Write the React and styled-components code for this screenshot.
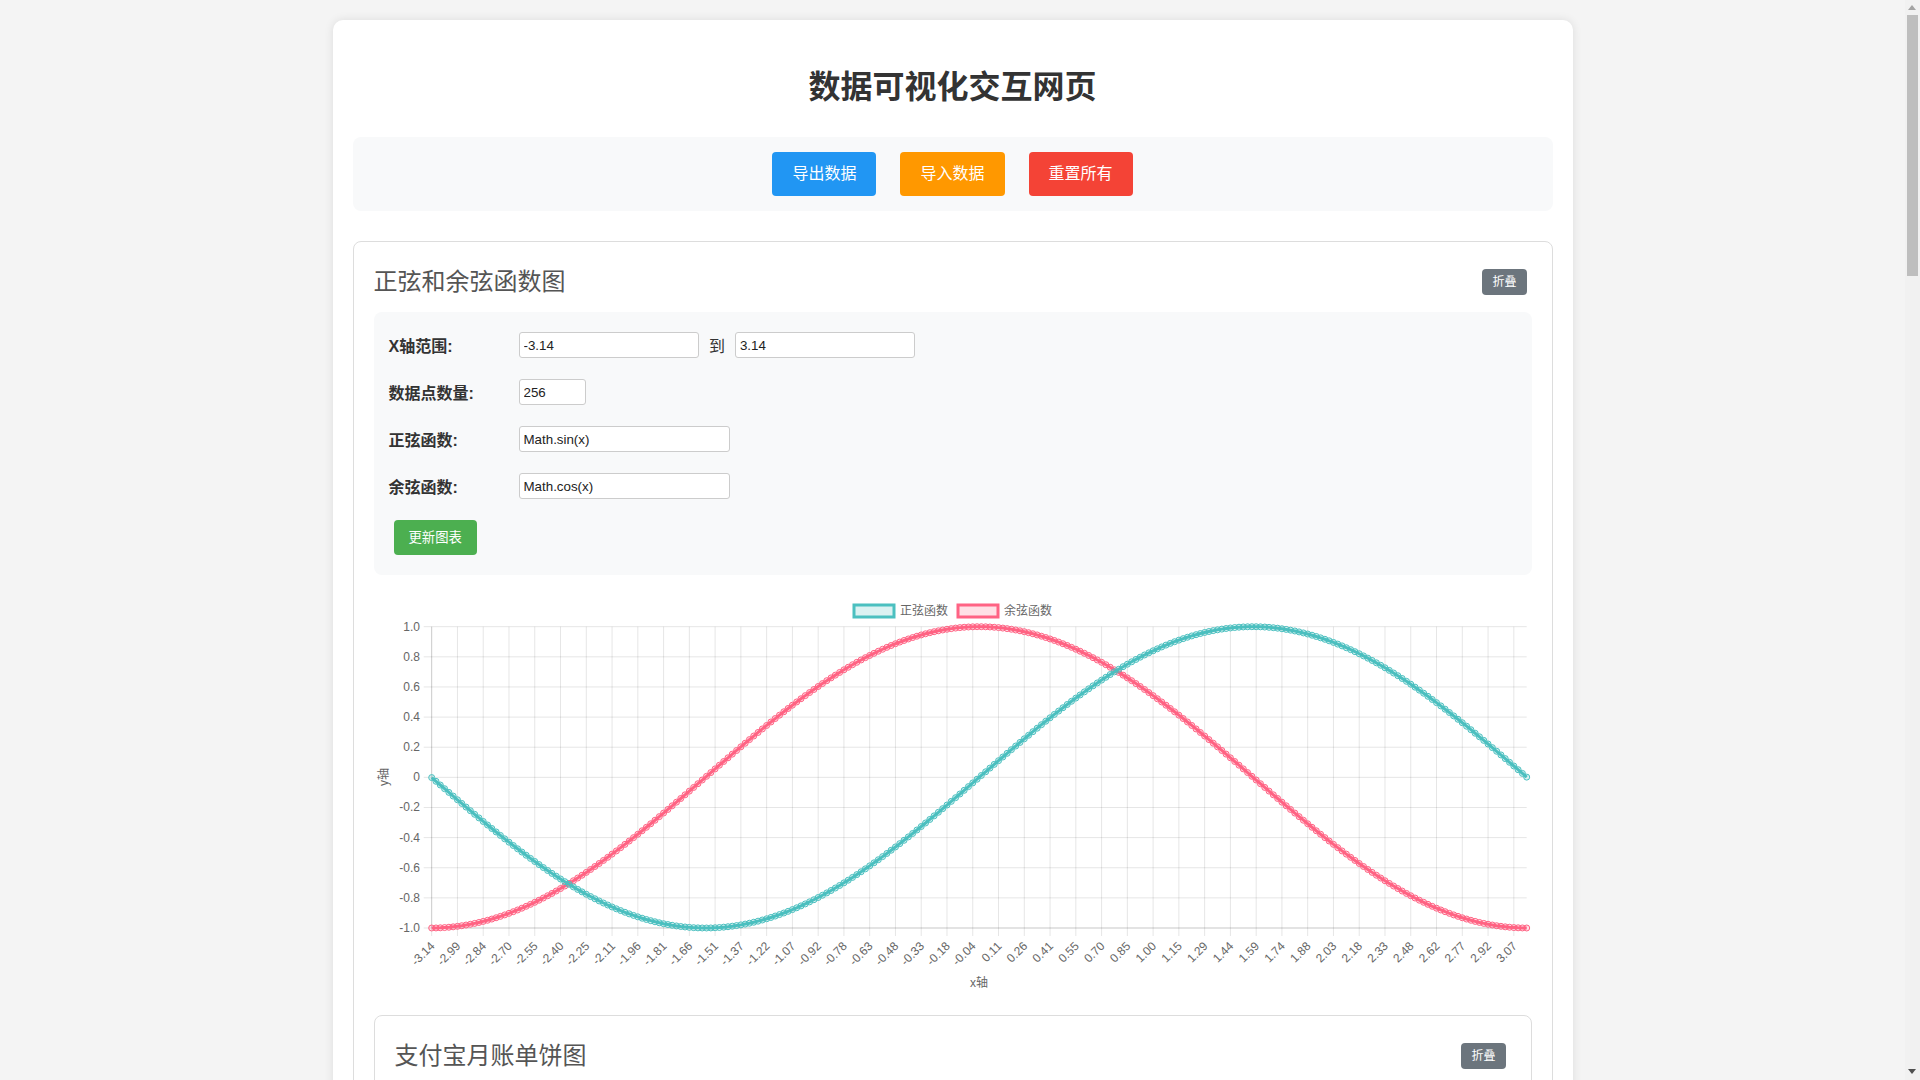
import React from 'react';
import styled, { createGlobalStyle } from 'styled-components';

const GlobalStyle = createGlobalStyle`
  body {
    margin: 0;
    padding: 20px 35px 20px 20px;
    background: #f4f4f4;
    font-family: "Liberation Sans", Arial, "Noto Sans CJK SC", sans-serif;
    color: #333;
  }
`;

// the page scrolls in the reference; headless shots hide the native bar, so draw it
const ScrollTrack = styled.div`
  position: fixed;
  top: 0;
  right: 0;
  width: 15px;
  height: 100vh;
  background: #f1f1f1;
  z-index: 10;
`;

const ScrollThumb = styled.div`
  position: absolute;
  top: 15px;
  left: 2px;
  width: 11px;
  height: 261px;
  background: #bebebe;
`;

const ScrollArrow = styled.div`
  position: absolute;
  left: 3px;
  width: 0;
  height: 0;
  border-left: 4.5px solid transparent;
  border-right: 4.5px solid transparent;
  ${(props) =>
    props.$down
      ? `bottom: 6px; border-top: 5px solid #505050;`
      : `top: 5px; border-bottom: 5px solid #a3a3a3;`}
`;

const Card = styled.div`
  max-width: 1200px;
  margin: 0 auto;
  padding: 20px;
  background: #fff;
  border-radius: 10px;
  box-shadow: 0 0 10px rgba(0, 0, 0, 0.1);
`;

const Title = styled.h1`
  margin: 23.5px 0 27.5px;
  font-size: 32px;
  line-height: 46px;
  text-align: center;
  color: #333;
`;

const Toolbar = styled.div`
  display: flex;
  justify-content: center;
  gap: 24px;
  padding: 15px;
  margin-bottom: 30px;
  background: #f8f9fa;
  border-radius: 8px;
`;

const ActionButton = styled.button`
  padding: 10px 20px;
  border: none;
  border-radius: 4px;
  background: ${(props) => props.$color};
  color: #fff;
  font-family: inherit;
  font-size: 16px;
  line-height: 24px;
  cursor: pointer;
`;

const Section = styled.div`
  padding: 20px;
  margin-bottom: ${(props) => (props.$last ? '0' : '20px')};
  border: 1px solid #ddd;
  border-radius: 8px;
`;

const SectionHeader = styled.div`
  display: flex;
  align-items: center;
  justify-content: space-between;
  height: 40px;
`;

const SectionTitle = styled.h2`
  margin: -6px 0 0;
  font-size: 24px;
  font-weight: normal;
  color: #555;
`;

const ToggleButton = styled.button`
  margin-right: 5px;
  padding: 4px 10px;
  border: none;
  border-radius: 4px;
  background: #6c757d;
  color: #fff;
  font-family: inherit;
  font-size: 12px;
  line-height: 18px;
`;

const Panel = styled.div`
  margin-top: 10px;
  padding: 20px 15px;
  background: #f8f9fa;
  border-radius: 8px;
`;

const FormRow = styled.div`
  display: flex;
  align-items: center;
  height: 26px;
  margin-bottom: 21px;
`;

const Label = styled.label`
  width: 130px;
  flex-shrink: 0;
  margin-top: -1px;
  font-size: 16px;
  font-weight: bold;
  color: #333;
`;

const TextInput = styled.input`
  box-sizing: border-box;
  width: ${(props) => props.$w}px;
  height: 26px;
  padding: 0 4px;
  border: 1px solid #ccc;
  border-radius: 3px;
  background: #fff;
  color: #222;
  font-family: "Liberation Sans", Arial, sans-serif;
  font-size: 13.33px;
`;

const RangeSep = styled.span`
  margin: 0 10px;
  font-size: 16px;
  color: #333;
`;

const UpdateButton = styled.button`
  margin-left: 5px;
  padding: 8px 15px;
  border: none;
  border-radius: 4px;
  background: #4caf50;
  color: #fff;
  font-family: inherit;
  font-size: 13.33px;
  line-height: 19px;
`;

const ChartBox = styled.div`
  height: 400px;
  margin: 20px 0;
`;

const ChartSvg = styled.svg`
  display: block;
  width: 100%;
  height: 100%;
  font-family: "Liberation Sans", Arial, "Noto Sans CJK SC", sans-serif;
  font-size: 12px;
`;

const Table = styled.table`
  width: 100%;
  margin-top: 20px;
  border-collapse: collapse;
  font-size: 14px;

  th,
  td {
    padding: 10px 12px;
    border: 1px solid #ddd;
    text-align: left;
  }

  th {
    background: #f2f2f2;
    color: #333;
  }
`;

// chart geometry (svg coordinates, 1158 x 400)
const W = 1158;
const PL = 57.7;
const PR = 1152.7;
const PT = 31.7;
const PB = 333;
const GRID = 'rgba(0,0,0,0.1)';
const TEAL = 'rgb(75, 192, 192)';
const PINK = 'rgb(255, 99, 132)';

const N = 256;
const xs = Array.from({ length: N }, (_, i) => -3.14 + (i * 6.28) / (N - 1));
const px = (i) => PL + (i * (PR - PL)) / (N - 1);
const py = (v) => PT + ((1 - v) / 2) * (PB - PT);

const yTicks = [1, 0.8, 0.6, 0.4, 0.2, 0, -0.2, -0.4, -0.6, -0.8, -1];

const Series = ({ fn, color, fill }) => {
  const pts = xs.map((x, i) => [px(i), py(fn(x))]);
  const d = pts.map((p, i) => `${i ? 'L' : 'M'}${p[0].toFixed(2)},${p[1].toFixed(2)}`).join('');
  return (
    <g>
      <path d={d} fill="none" stroke={color} strokeWidth="3" strokeLinejoin="round" />
      {pts.map((p, i) => (
        <circle key={i} cx={p[0]} cy={p[1]} r="3" fill={fill} stroke={color} strokeWidth="1" />
      ))}
    </g>
  );
};

const LegendItem = ({ x, color, fill, label }) => (
  <g>
    <rect x={x} y="10" width="40" height="12" fill={fill} stroke={color} strokeWidth="3" />
    <text x={x + 46} y="16" fill="#666" dominantBaseline="central">
      {label}
    </text>
  </g>
);

const TrigChart = () => {
  const xTickIdx = [];
  for (let i = 0; i < N; i += 6) xTickIdx.push(i);
  return (
    <ChartSvg viewBox={`0 0 ${W} 400`}>
      <LegendItem x={480} color={TEAL} fill="rgba(75,192,192,0.2)" label="正弦函数" />
      <LegendItem x={584} color={PINK} fill="rgba(255,99,132,0.2)" label="余弦函数" />

      {yTicks.map((v) => (
        <g key={v}>
          <line x1={PL - 8} x2={PR} y1={py(v)} y2={py(v)} stroke={GRID} />
          <text x="46" y={py(v)} fill="#666" textAnchor="end" dominantBaseline="central">
            {v === 0 ? '0' : v.toFixed(1)}
          </text>
        </g>
      ))}
      {xTickIdx.map((i) => (
        <g key={i}>
          <line x1={px(i)} x2={px(i)} y1={PT} y2={PB + 8} stroke={GRID} />
          <text
            transform={`translate(${px(i) + 1} 349) rotate(-45)`}
            fill="#666"
            textAnchor="end"
            dominantBaseline="central"
          >
            {xs[i].toFixed(2)}
          </text>
        </g>
      ))}
      <line x1={PL} x2={PL} y1={PT} y2={PB} stroke="rgba(0,0,0,0.12)" />
      <line x1={PL} x2={PR} y1={PB} y2={PB} stroke="rgba(0,0,0,0.12)" />

      <text transform="translate(10 182) rotate(-90)" fill="#666" textAnchor="middle" dominantBaseline="central">
        y轴
      </text>
      <text x="605" y="388" fill="#666" textAnchor="middle" dominantBaseline="central">
        x轴
      </text>

      <Series fn={Math.cos} color={PINK} fill="rgba(255,99,132,0.2)" />
      <Series fn={Math.sin} color={TEAL} fill="rgba(75,192,192,0.2)" />
    </ChartSvg>
  );
};

const bills = [
  { name: '餐饮美食', value: 1280, color: '#ff6384' },
  { name: '日用百货', value: 560, color: '#36a2eb' },
  { name: '交通出行', value: 320, color: '#ffce56' },
  { name: '休闲娱乐', value: 450, color: '#4bc0c0' },
  { name: '服饰装扮', value: 680, color: '#9966ff' },
  { name: '充值缴费', value: 210, color: '#ff9f40' },
  { name: '医疗健康', value: 150, color: '#c9cbcf' },
  { name: '其他', value: 300, color: '#8bc34a' },
];

const PieChart = () => {
  const total = bills.reduce((s, b) => s + b.value, 0);
  const cx = W / 2;
  const cy = 215;
  const r = 165;
  let a0 = -Math.PI / 2;
  const legendW = bills.length * 96;
  return (
    <ChartSvg viewBox={`0 0 ${W} 400`}>
      {bills.map((b, i) => (
        <g key={b.name}>
          <rect x={cx - legendW / 2 + i * 96} y="10" width="40" height="12" fill={b.color} stroke="#fff" />
          <text x={cx - legendW / 2 + i * 96 + 46} y="16" fill="#666" dominantBaseline="central">
            {b.name}
          </text>
        </g>
      ))}
      {bills.map((b) => {
        const a1 = a0 + (b.value / total) * Math.PI * 2;
        const large = a1 - a0 > Math.PI ? 1 : 0;
        const d = `M${cx},${cy} L${cx + r * Math.cos(a0)},${cy + r * Math.sin(a0)} A${r},${r} 0 ${large} 1 ${
          cx + r * Math.cos(a1)
        },${cy + r * Math.sin(a1)} Z`;
        a0 = a1;
        return <path key={b.name} d={d} fill={b.color} stroke="#fff" strokeWidth="2" />;
      })}
    </ChartSvg>
  );
};

const months = ['1月', '2月', '3月', '4月', '5月', '6月', '7月', '8月', '9月', '10月', '11月', '12月'];
const income = [8200, 7600, 8800, 9100, 8500, 9300, 8700, 9000, 9400, 8900, 9600, 10200];
const expense = [4300, 5200, 3900, 4600, 5100, 4800, 5600, 4200, 4700, 5300, 6100, 5800];

const BarChart = () => {
  const max = 12000;
  const top = 40;
  const bottom = 360;
  const left = 60;
  const right = 1150;
  const slot = (right - left) / months.length;
  const y = (v) => bottom - (v / max) * (bottom - top);
  return (
    <ChartSvg viewBox={`0 0 ${W} 400`}>
      <rect x="480" y="10" width="40" height="12" fill="rgba(54,162,235,0.5)" stroke="#36a2eb" strokeWidth="3" />
      <text x="526" y="16" fill="#666" dominantBaseline="central">收入</text>
      <rect x="584" y="10" width="40" height="12" fill="rgba(255,99,132,0.5)" stroke="#ff6384" strokeWidth="3" />
      <text x="630" y="16" fill="#666" dominantBaseline="central">支出</text>
      {[0, 2000, 4000, 6000, 8000, 10000, 12000].map((v) => (
        <g key={v}>
          <line x1={left - 8} x2={right} y1={y(v)} y2={y(v)} stroke={GRID} />
          <text x={left - 12} y={y(v)} fill="#666" textAnchor="end" dominantBaseline="central">
            {v}
          </text>
        </g>
      ))}
      {months.map((m, i) => (
        <g key={m}>
          <rect x={left + i * slot + 14} y={y(income[i])} width={(slot - 28) / 2} height={bottom - y(income[i])} fill="rgba(54,162,235,0.5)" stroke="#36a2eb" />
          <rect x={left + i * slot + 14 + (slot - 28) / 2} y={y(expense[i])} width={(slot - 28) / 2} height={bottom - y(expense[i])} fill="rgba(255,99,132,0.5)" stroke="#ff6384" />
          <text x={left + i * slot + slot / 2} y={bottom + 18} fill="#666" textAnchor="middle">
            {m}
          </text>
        </g>
      ))}
    </ChartSvg>
  );
};

const SectionHead = ({ title }) => (
  <SectionHeader>
    <SectionTitle>{title}</SectionTitle>
    <ToggleButton>折叠</ToggleButton>
  </SectionHeader>
);

const App = () => {
  return (
    <>
      <GlobalStyle />
      <ScrollTrack>
        <ScrollArrow />
        <ScrollThumb />
        <ScrollArrow $down />
      </ScrollTrack>
      <Card>
        <Title>数据可视化交互网页</Title>
        <Toolbar>
          <ActionButton $color="#2196f3">导出数据</ActionButton>
          <ActionButton $color="#ff9800">导入数据</ActionButton>
          <ActionButton $color="#f44336">重置所有</ActionButton>
        </Toolbar>

        <Section>
          <SectionHead title="正弦和余弦函数图" />
          <Panel>
            <FormRow>
              <Label>X轴范围:</Label>
              <TextInput $w={180.4} defaultValue="-3.14" />
              <RangeSep>到</RangeSep>
              <TextInput $w={180.4} defaultValue="3.14" />
            </FormRow>
            <FormRow>
              <Label>数据点数量:</Label>
              <TextInput $w={67.4} defaultValue="256" />
            </FormRow>
            <FormRow>
              <Label>正弦函数:</Label>
              <TextInput $w={211.4} defaultValue="Math.sin(x)" />
            </FormRow>
            <FormRow>
              <Label>余弦函数:</Label>
              <TextInput $w={211.4} defaultValue="Math.cos(x)" />
            </FormRow>
            <UpdateButton>更新图表</UpdateButton>
          </Panel>
          <ChartBox>
            <TrigChart />
          </ChartBox>

          <Section $last>
            <SectionHead title="支付宝月账单饼图" />
            <Panel>
              <FormRow>
                <Label>账单月份:</Label>
                <TextInput $w={180.4} defaultValue="2024-03" />
              </FormRow>
              {bills.map((b) => (
                <FormRow key={b.name}>
                  <Label>{b.name}:</Label>
                  <TextInput $w={120} defaultValue={b.value} />
                </FormRow>
              ))}
              <UpdateButton>更新图表</UpdateButton>
            </Panel>
            <ChartBox>
              <PieChart />
            </ChartBox>
          </Section>
        </Section>

        <Section>
          <SectionHead title="月度收支柱状图" />
          <Panel>
            <FormRow>
              <Label>年份:</Label>
              <TextInput $w={120} defaultValue="2024" />
            </FormRow>
            <FormRow>
              <Label>收入数据:</Label>
              <TextInput $w={420} defaultValue={income.join(',')} />
            </FormRow>
            <FormRow>
              <Label>支出数据:</Label>
              <TextInput $w={420} defaultValue={expense.join(',')} />
            </FormRow>
            <UpdateButton>更新图表</UpdateButton>
          </Panel>
          <ChartBox>
            <BarChart />
          </ChartBox>
        </Section>

        <Section $last>
          <SectionHead title="账单明细表" />
          <Table>
            <thead>
              <tr>
                <th>月份</th>
                <th>收入 (元)</th>
                <th>支出 (元)</th>
                <th>结余 (元)</th>
              </tr>
            </thead>
            <tbody>
              {months.map((m, i) => (
                <tr key={m}>
                  <td>{m}</td>
                  <td>{income[i]}</td>
                  <td>{expense[i]}</td>
                  <td>{income[i] - expense[i]}</td>
                </tr>
              ))}
            </tbody>
          </Table>
        </Section>
      </Card>
    </>
  );
};

export default App;
